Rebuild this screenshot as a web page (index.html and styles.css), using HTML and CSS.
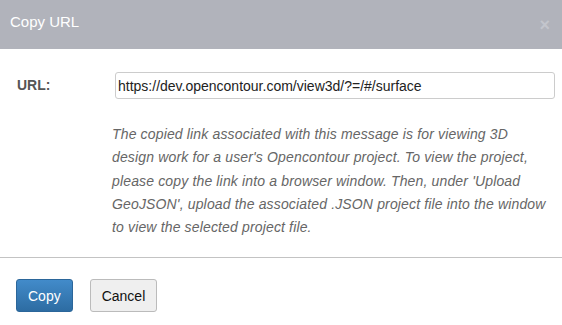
FILE: index.html
```html
<!DOCTYPE html>
<html lang="en">
<head>
    <meta charset="UTF-8">
    <title>Copy URL</title>
    <link rel="stylesheet" href="styles.css">
</head>
<body>
    <div class="modal">
        <div class="modal-header">
            <h4 class="modal-title">Copy URL</h4>
            <span class="close">&times;</span>
        </div>
        <div class="modal-body">
            <div class="url-row">
                <label class="url-label" for="url">URL:</label>
                <input id="url" class="url-input" type="text" value="https://dev.opencontour.com/view3d/?=/#/surface">
            </div>
            <p class="help-text">The copied link associated with this message is for viewing 3D<br>
                design work for a user's Opencontour project. To view the project,<br>
                please copy the link into a browser window. Then, under 'Upload<br>
                GeoJSON', upload the associated .JSON project file into the window<br>
                to view the selected project file.</p>
        </div>
        <div class="modal-footer">
            <button class="btn btn-primary">Copy</button>
            <button class="btn btn-default">Cancel</button>
        </div>
    </div>
</body>
</html>
```
FILE: styles.css
```css
body {
    margin: 0;
    font-family: 'Liberation Sans', Arial, sans-serif;
    font-size: 14px;
    color: #333;
    background: #fff;
}

.modal-header {
    height: 49px;
    background-color: #b1b3bb;
    display: flex;
    align-items: center;
    justify-content: space-between;
    padding: 0 10px;
    box-sizing: border-box;
}

.modal-title {
    margin: 0 0 7px 0;
    font-size: 15px;
    font-weight: normal;
    color: #fff;
}

.close {
    font-size: 18px;
    font-weight: bold;
    color: #c3c5cc;
    margin: 0 2px 0 0;
    line-height: 1;
}

.modal-body {
    padding: 23px 7px 0 17px;
}

.url-row {
    display: grid;
    grid-template-columns: 98px 1fr;
    align-items: start;
}

.url-label {
    font-weight: bold;
    color: #555;
    padding-top: 5px;
}

.url-input {
    height: 27px;
    box-sizing: border-box;
    border: 1px solid #ccc;
    border-radius: 3px;
    padding: 0 2px;
    font-family: inherit;
    font-size: 14px;
    color: #222;
}

.help-text {
    margin: 24px 0 0 95px;
    font-style: italic;
    color: #666;
    line-height: 23.3px;
    letter-spacing: 0.15px;
    padding-bottom: 18px;
    white-space: nowrap;
}

.modal-footer {
    border-top: 1px solid #c3c3c3;
    padding: 21px 16px;
    display: flex;
    gap: 17px;
}

.btn {
    height: 33px;
    padding: 0 11px;
    font-family: inherit;
    font-size: 14px;
    border-radius: 3px;
}

.btn-primary {
    color: #fff;
    background: linear-gradient(#428bca, #2d6ca2);
    border: 1px solid #2b669a;
}

.btn-default {
    color: #111;
    background: #efefef;
    border: 1px solid #bbb;
}
```
